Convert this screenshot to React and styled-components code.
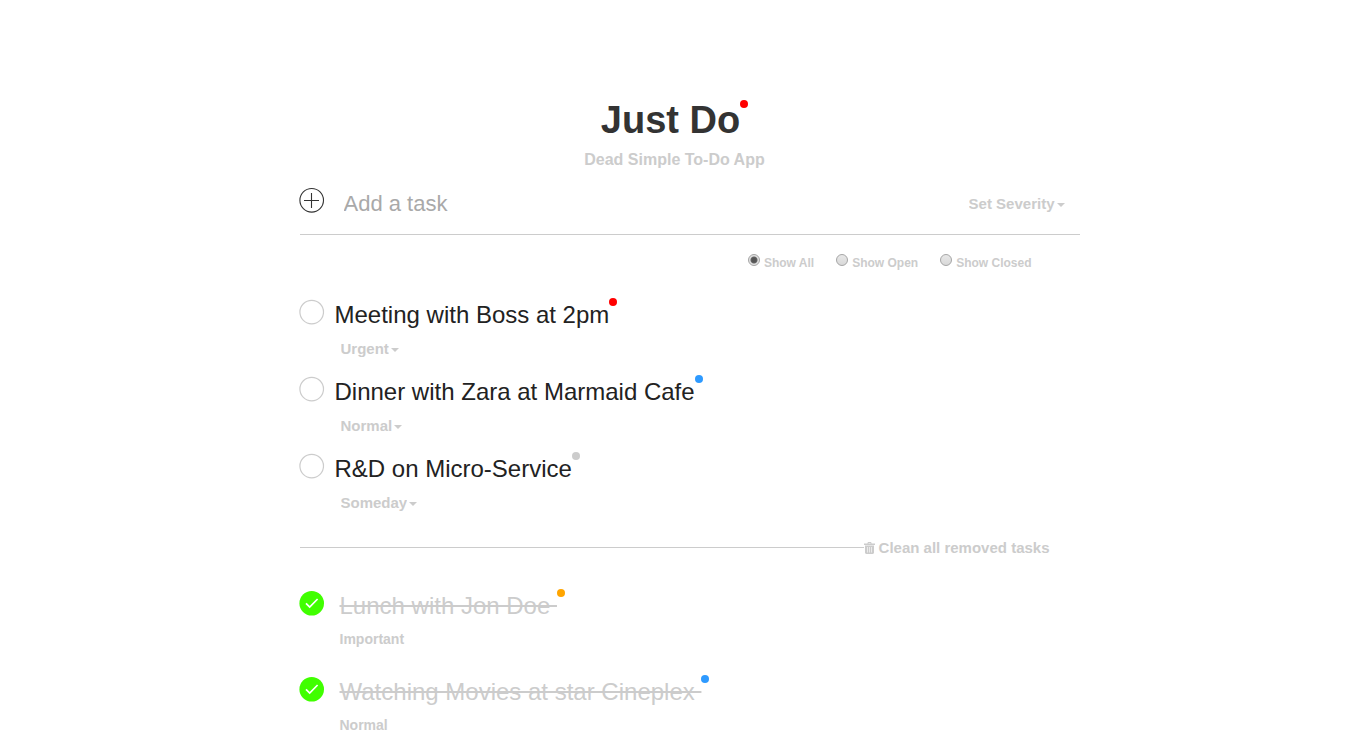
import React, { useState } from "react";
import styled, { createGlobalStyle } from "styled-components";

const GlobalStyle = createGlobalStyle`
  *, *::before, *::after { box-sizing: border-box; }
  body {
    margin: 0;
    background: #fff;
    color: #222;
    font-family: "Liberation Sans", Arial, sans-serif;
    font-size: 14px;
    line-height: 20px;
    overflow-x: hidden;
  }
`;

const muted = "#ccc";
const severityColors = {
  Urgent: "red",
  Important: "orange",
  Normal: "#2e9aff",
  Someday: "#ccc",
};

const Page = styled.main`
  max-width: 750px;
  margin: 0 auto;
  padding-top: 98px;
`;

const Header = styled.header`
  text-align: center;
`;

const Title = styled.h1`
  display: flex;
  justify-content: center;
  margin: 0;
  font-size: 38px;
  line-height: 44px;
  color: #333;
`;

const TitleDot = styled.i`
  width: 8px;
  height: 8px;
  margin-top: 2px;
  border-radius: 50%;
  background: red;
`;

const Dot = styled.i`
  position: absolute;
  left: 100%;
  top: -2px;
  width: 8px;
  height: 8px;
  border-radius: 50%;
  background: ${(p) => p.$color};
`;

const Subtitle = styled.p`
  margin: 8px 0 0;
  font-size: 16px;
  font-weight: bold;
  color: ${muted};
`;

const AddForm = styled.form`
  display: flex;
  align-items: center;
  height: 65px;
  margin-right: -30px;
  padding-right: 15px;
  border-bottom: 1px solid ${muted};
`;

const IconButton = styled.button`
  display: block;
  flex: none;
  width: 25px;
  height: 25px;
  padding: 0;
  border: 0;
  background: none;
  cursor: pointer;

  svg { display: block; overflow: visible; }
`;

const AddButton = styled(IconButton)`
  margin-bottom: 4px;
`;

const TaskInput = styled.input`
  flex: 1;
  min-width: 0;
  height: 34px;
  margin: 3px 0 0 19px;
  padding: 0;
  border: 0;
  outline: 0;
  font: 22px "Liberation Sans", Arial, sans-serif;
  color: #222;

  &::placeholder { color: #a9a9a9; opacity: 1; }
`;

const SelectWrap = styled.span`
  display: inline-grid;
  align-items: center;
  justify-items: end;
  margin-top: 4px;

  > * { grid-area: 1 / 1; }
`;

const Select = styled.select`
  appearance: none;
  field-sizing: content;
  height: 20px;
  padding: 0 10px 0 0;
  border: 0;
  outline: 0;
  background: none;
  color: ${muted};
  font: bold 15px/20px "Liberation Sans", Arial, sans-serif;
  cursor: pointer;
`;

const Caret = styled.span`
  margin-top: 2px;
  border: 4px solid transparent;
  border-top-color: ${muted};
  border-bottom: 0;
  pointer-events: none;
`;

const Filters = styled.div`
  display: flex;
  justify-content: flex-end;
  gap: 22px;
  margin-top: 18px;
  padding-right: 18px;
`;

const FilterLabel = styled.label`
  display: flex;
  gap: 4px;
  font-size: 12px;
  font-weight: bold;
  color: ${muted};
  cursor: pointer;
`;

const Radio = styled.input`
  appearance: none;
  width: 12px;
  height: 12px;
  margin: 1px 0 0;
  border: 1px solid #a5a5a5;
  border-radius: 50%;
  background: linear-gradient(#e8e8e8, #d9d9d9);

  &:checked {
    background: radial-gradient(circle, #555 0 2px, #666 3px, transparent 4px), #e2e2e2;
  }
`;

const TaskList = styled.ul`
  list-style: none;
  margin: 0;
  padding: ${(p) => (p.$done ? 33 : 27)}px 0 0;
`;

const Task = styled.li`
  display: flex;
  align-items: flex-start;
  gap: ${(p) => (p.$done ? 15 : 10)}px;
  height: ${(p) => (p.$done ? 86 : 77)}px;
`;

const TaskBody = styled.div`
  display: flex;
  flex-direction: column;
  align-items: flex-start;
`;

const TaskName = styled.span`
  position: relative;
  font-size: 24px;
  line-height: 30px;
  white-space: pre;
`;

const DoneName = styled.del`
  color: ${muted};
`;

const TaskSelect = styled(SelectWrap)`
  margin: 9px 0 0 6px;
`;

const DoneSeverity = styled.span`
  margin-top: 8px;
  font-weight: bold;
  color: ${muted};
`;

const Divider = styled.div`
  display: flex;
  align-items: center;
  margin-top: 7px;

  &::before {
    content: "";
    flex: 1;
    margin-bottom: 1px;
    border-top: 1px solid ${muted};
  }
`;

const CleanButton = styled.button`
  display: flex;
  align-items: center;
  gap: 4px;
  padding: 0;
  border: 0;
  background: none;
  color: ${muted};
  font: bold 15px/20px "Liberation Sans", Arial, sans-serif;
  cursor: pointer;
`;

const PlusCircle = () => (
  <svg width="25" height="25" viewBox="0 0 25 25" fill="none" stroke="#333">
    <circle cx="11.7" cy="12.3" r="11.8" strokeWidth="1.1" />
    <path d="M11.5 5v15M4 12.5h15" strokeWidth="1.1" />
  </svg>
);

const OpenCircle = () => (
  <svg width="25" height="25" viewBox="0 0 25 25" fill="none" stroke="#ccc">
    <circle cx="11.7" cy="12.1" r="11.8" strokeWidth="1.2" />
  </svg>
);

const CheckCircle = () => (
  <svg width="25" height="25" viewBox="0 0 25 25" fill="none">
    <circle cx="11.7" cy="12.3" r="12.3" fill="#40ff00" />
    <path d="M6 12.3l3.7 3.7 7.9-8" stroke="#fff" strokeWidth="1.7" />
  </svg>
);

const Trash = () => (
  <svg width="11" height="12" viewBox="0 0 11 12" fill="#ccc">
    <path fillRule="evenodd" d="M3.5 1.5V.8L4.2 0h2.6l.7.8v.7H11V3H0V1.5zM4.5 1.5h2V1h-2zM1 3.5h9V11l-1 1H2l-1-1zM3 5v5.5h.6V5zM5.2 5v5.5h.6V5zM7.4 5v5.5H8V5z" />
  </svg>
);

function SeveritySelect({ label, value, onChange, placeholder, as: Wrap = SelectWrap }) {
  return (
    <Wrap>
      <Select aria-label={label} value={value} onChange={(e) => onChange(e.target.value)}>
        {placeholder && <option value="">{placeholder}</option>}
        {Object.keys(severityColors).map((s) => (
          <option key={s}>{s}</option>
        ))}
      </Select>
      <Caret />
    </Wrap>
  );
}

const initialTasks = [
  { id: 1, name: "Meeting with Boss at 2pm", severity: "Urgent", done: false },
  { id: 2, name: "Dinner with Zara at Marmaid Cafe", severity: "Normal", done: false },
  { id: 3, name: "R&D on Micro-Service", severity: "Someday", done: false },
  { id: 4, name: "Lunch with Jon Doe", severity: "Important", done: true },
  { id: 5, name: "Watching Movies at star Cineplex", severity: "Normal", done: true },
];

export default function App() {
  const [tasks, setTasks] = useState(initialTasks);
  const [filter, setFilter] = useState("All");
  const [draft, setDraft] = useState("");
  const [severity, setSeverity] = useState("");

  const update = (id, change) =>
    setTasks(tasks.map((t) => (t.id === id ? { ...t, ...change } : t)));

  const addTask = (e) => {
    e.preventDefault();
    if (!draft.trim()) return;
    setTasks([
      ...tasks,
      { id: Date.now(), name: draft.trim(), severity: severity || "Normal", done: false },
    ]);
    setDraft("");
  };

  return (
    <>
      <GlobalStyle />
      <Page>
        <Header>
          <Title>
            Just Do
            <TitleDot />
          </Title>
          <Subtitle>Dead Simple To-Do App</Subtitle>
        </Header>

        <AddForm onSubmit={addTask}>
          <AddButton type="submit" aria-label="Add task">
            <PlusCircle />
          </AddButton>
          <TaskInput
            aria-label="Add a task"
            placeholder="Add a task"
            value={draft}
            onChange={(e) => setDraft(e.target.value)}
          />
          <SeveritySelect
            label="Severity"
            placeholder="Set Severity"
            value={severity}
            onChange={setSeverity}
          />
        </AddForm>

        <Filters>
          {["All", "Open", "Closed"].map((f) => (
            <FilterLabel key={f}>
              <Radio type="radio" name="filter" checked={filter === f} onChange={() => setFilter(f)} />
              Show {f}
            </FilterLabel>
          ))}
        </Filters>

        {filter !== "Closed" && (
          <TaskList>
            {tasks.filter((t) => !t.done).map((t) => (
              <Task key={t.id}>
                <IconButton aria-label={`Complete ${t.name}`} onClick={() => update(t.id, { done: true })}>
                  <OpenCircle />
                </IconButton>
                <TaskBody>
                  <TaskName>
                    {t.name}
                    <Dot $color={severityColors[t.severity]} />
                  </TaskName>
                  <SeveritySelect
                    as={TaskSelect}
                    label={`Severity of ${t.name}`}
                    value={t.severity}
                    onChange={(s) => update(t.id, { severity: s })}
                  />
                </TaskBody>
              </Task>
            ))}
          </TaskList>
        )}

        <Divider>
          <CleanButton onClick={() => setTasks(tasks.filter((t) => !t.done))}>
            <Trash />
            Clean all removed tasks
          </CleanButton>
        </Divider>

        {filter !== "Open" && (
          <TaskList $done>
            {tasks.filter((t) => t.done).map((t) => (
              <Task key={t.id} $done>
                <IconButton aria-label={`Reopen ${t.name}`} onClick={() => update(t.id, { done: false })}>
                  <CheckCircle />
                </IconButton>
                <TaskBody>
                  <TaskName>
                    <DoneName>{t.name + " "}</DoneName>
                    <Dot $color={severityColors[t.severity]} />
                  </TaskName>
                  <DoneSeverity>{t.severity}</DoneSeverity>
                </TaskBody>
              </Task>
            ))}
          </TaskList>
        )}
      </Page>
    </>
  );
}
